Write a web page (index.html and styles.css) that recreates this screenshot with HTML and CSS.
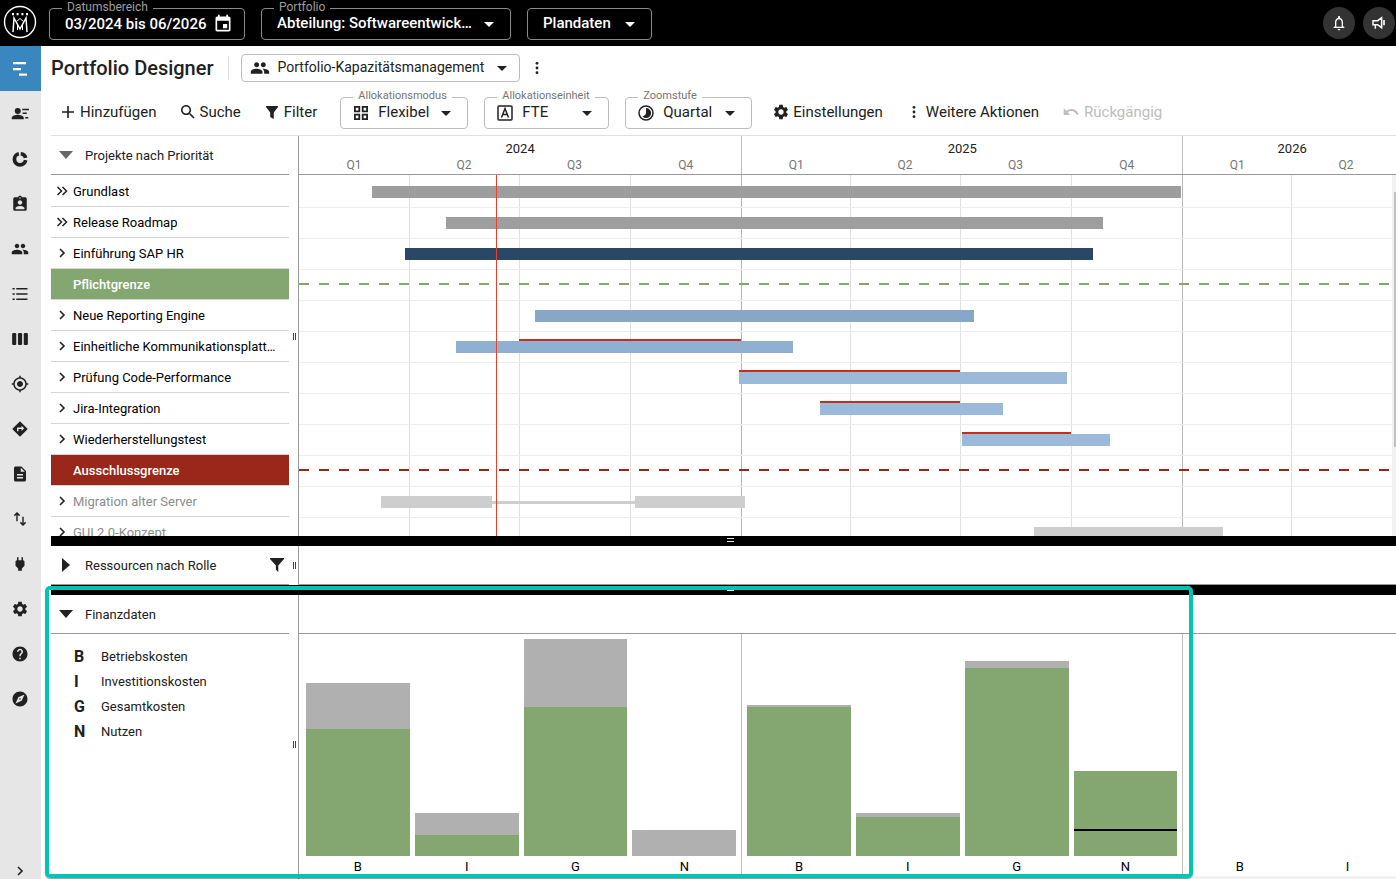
FILE: index.html
```html
<!DOCTYPE html>
<html lang="de">
  <head>
    <meta charset="UTF-8" />
    <meta name="viewport" content="width=device-width, initial-scale=1.0" />
    <title>Portfolio Designer</title>
    <link rel="stylesheet" href="styles.css">
  </head>
  <body>
    <!-- Icons -->
    <svg class="icon-defs" aria-hidden="true">
      <symbol id="i-caret" viewBox="0 0 10 5"><path d="M0 0h10L5 5z"/></symbol>
      <symbol id="i-dots" viewBox="0 0 24 24"><circle cx="12" cy="4" r="2.4"/><circle cx="12" cy="12" r="2.4"/><circle cx="12" cy="20" r="2.4"/></symbol>
      <symbol id="i-people" viewBox="0 0 24 24"><path d="M16 11c1.66 0 2.99-1.34 2.99-3S17.66 5 16 5c-1.66 0-3 1.34-3 3s1.34 3 3 3zm-8 0c1.66 0 2.99-1.34 2.99-3S9.66 5 8 5C6.34 5 5 6.34 5 8s1.34 3 3 3zm0 2c-2.33 0-7 1.17-7 3.5V19h14v-2.5c0-2.33-4.67-3.5-7-3.5zm8 0c-.29 0-.62.02-.97.05 1.16.84 1.97 1.97 1.97 3.45V19h6v-2.5c0-2.33-4.67-3.5-7-3.5z"/></symbol>
      <symbol id="i-settings" viewBox="0 0 24 24"><path d="M19.14 12.94c.04-.3.06-.61.06-.94 0-.32-.02-.64-.07-.94l2.03-1.58c.18-.14.23-.41.12-.61l-1.92-3.32c-.12-.22-.37-.29-.59-.22l-2.39.96c-.5-.38-1.03-.7-1.62-.94l-.36-2.54c-.04-.24-.24-.41-.48-.41h-3.84c-.24 0-.43.17-.47.41l-.36 2.54c-.59.24-1.13.57-1.62.94l-2.39-.96c-.22-.08-.47 0-.59.22L2.74 8.87c-.12.21-.08.47.12.61l2.03 1.58c-.05.3-.09.63-.09.94s.02.64.07.94l-2.03 1.58c-.18.14-.23.41-.12.61l1.92 3.32c.12.22.37.29.59.22l2.39-.96c.5.38 1.03.7 1.62.94l.36 2.54c.05.24.24.41.48.41h3.84c.24 0 .44-.17.47-.41l.36-2.54c.59-.24 1.13-.56 1.62-.94l2.39.96c.22.08.47 0 .59-.22l1.92-3.32c.12-.22.07-.47-.12-.61l-2.01-1.58zM12 15.6c-1.98 0-3.6-1.62-3.6-3.6s1.62-3.6 3.6-3.6 3.6 1.62 3.6 3.6-1.62 3.6-3.6 3.6z"/></symbol>
      <symbol id="i-filter" viewBox="0 0 14 14"><path d="M1 1h12v1L8.800 7.500V14L5.200 12V7.500L1 2z"/></symbol>
      <symbol id="i-funnel" viewBox="0 0 14 14"><path d="M0 0h14v1L8.300 7.500V14L5.900 11.800V7.500L0 1z"/></symbol>
      <symbol id="i-right" viewBox="0 0 12 12"><path d="M4 2l4 4-4 4" fill="none" stroke="currentColor" stroke-width="1.600"/></symbol>
      <symbol id="i-double" viewBox="0 0 12 12"><path d="M1.500 2l4 4-4 4M6.500 2l4 4-4 4" fill="none" stroke="currentColor" stroke-width="1.500"/></symbol>
    </svg>

    <header class="topbar">
      <a class="logo" href="#" aria-label="Startseite">
        <svg viewBox="0 0 34 34" fill="none" stroke="currentColor">
          <circle cx="17" cy="17" r="15.500" stroke-width="1.400"/>
          <path d="M10 27l1-14 6 11 6-11 1 14" stroke-width="1.500"/>
          <path d="M13.500 16.500l3.500-3 3.500 3M14.500 19v6M19.500 19v6" stroke-width="1"/>
          <path d="M10 8v2.200M14.600 8v2.200M19.400 8v2.200M24 8v2.200" stroke-width="2"/>
        </svg>
      </a>
      <div class="field field-dark field-date">
        <label for="dateRange">Datumsbereich</label>
        <button type="button" id="dateRange">
          03/2024 bis 06/2026
          <svg class="icon-20" viewBox="0 0 24 24"><path d="M17 12h-5v5h5v-5zM16 1v2H8V1H6v2H5c-1.11 0-1.99.9-1.99 2L3 19c0 1.1.89 2 2 2h14c1.100 0 2-.9 2-2V5c0-1.100-.9-2-2-2h-1V1h-2zm3 18H5V8h14v11z"/></svg>
        </button>
      </div>
      <div class="field field-dark field-portfolio">
        <label for="portfolio">Portfolio</label>
        <select id="portfolio"><option>Abteilung: Softwareentwick…</option></select>
        <svg class="caret"><use href="#i-caret"/></svg>
      </div>
      <div class="field field-dark field-plan">
        <select aria-label="Datenbasis"><option>Plandaten</option></select>
        <svg class="caret"><use href="#i-caret"/></svg>
      </div>
      <div class="topbar-actions">
        <button type="button" class="round-btn" aria-label="Benachrichtigungen">
          <svg class="icon-16" viewBox="0 0 24 24"><path d="M12 23c1.100 0 2-.9 2-2h-4c0 1.100.9 2 2 2zm6-6v-6c0-3.070-1.630-5.640-4.500-6.320V3c0-.83-.67-1.500-1.500-1.500s-1.500.67-1.500 1.500v1.680C7.640 5.360 6 7.920 6 11v6l-2 1v1.500h16V18l-2-1zm-2 .5H8V11c0-2.480 1.510-4.500 4-4.500s4 2.020 4 4.500v6.500z"/></svg>
        </button>
        <button type="button" class="round-btn" aria-label="Neuigkeiten">
          <svg class="icon-16" viewBox="0 0 24 24" fill="none" stroke="currentColor" stroke-width="2.200"><path d="M3 8.500h7l6-4.500v15l-6-4.500H3zM6.500 15v5.500"/><path d="M19.500 7.500v8" stroke-width="2.500"/></svg>
        </button>
      </div>
    </header>

    <div class="layout">
      <nav class="sidebar">
        <a class="active" href="#" aria-label="Portfolio Designer"><svg viewBox="0 0 18 18"><path d="M2 2h13v2.200H2zM2 8h8v2.200H2zM8 13.500h8v2.200H8z"/></svg></a>
        <a href="#" aria-label="Rollen"><svg viewBox="0 0 24 24"><circle cx="9" cy="8" r="4"/><path d="M1 19v-2c0-2.500 5-4 8-4s8 1.500 8 4v2zM15 5h9v2h-9zM15.500 10H21v2h-5.500zM19 16h4v2h-4z"/></svg></a>
        <a href="#" aria-label="Auslastung"><svg viewBox="0 0 24 24" fill="none" stroke="currentColor" stroke-width="5"><path d="M13 5a7.300 7.300 0 0 1 6.500 5.500M19.500 13.500A7.500 7.500 0 1 1 10.500 5"/></svg></a>
        <a href="#" aria-label="Aufgaben"><svg viewBox="0 0 24 24"><path d="M19 3h-4.180C14.400 1.840 13.300 1 12 1c-1.300 0-2.400.84-2.820 2H5c-1.100 0-2 .9-2 2v14c0 1.100.9 2 2 2h14c1.100 0 2-.9 2-2V5c0-1.100-.9-2-2-2zm-7 0c.55 0 1 .45 1 1s-.45 1-1 1-1-.45-1-1 .45-1 1-1zm0 4c1.660 0 3 1.340 3 3s-1.340 3-3 3-3-1.340-3-3 1.340-3 3-3zm6 12H6v-1.400c0-2 4-3.100 6-3.100s6 1.100 6 3.100V19z"/></svg></a>
        <a href="#" aria-label="Team"><svg><use href="#i-people"/></svg></a>
        <a href="#" aria-label="Liste"><svg viewBox="0 0 24 24"><path d="M2 4h3v2H2zM7 4h15v2H7zM2 11h3v2H2zM7 11h15v2H7zM2 18h3v2H2zM7 18h15v2H7z"/></svg></a>
        <a href="#" aria-label="Board"><svg viewBox="0 0 24 24"><rect x="1.500" y="4" width="5.500" height="16" rx="1.500"/><rect x="9.300" y="4" width="5.500" height="16" rx="1.500"/><rect x="17" y="4" width="5.500" height="16" rx="1.500"/></svg></a>
        <a href="#" aria-label="Ziele"><svg viewBox="0 0 24 24"><path d="M12 8c-2.210 0-4 1.790-4 4s1.790 4 4 4 4-1.790 4-4-1.790-4-4-4zm8.940 3c-.46-4.170-3.770-7.480-7.940-7.940V1h-2v2.060C6.830 3.520 3.520 6.830 3.060 11H1v2h2.060c.46 4.170 3.770 7.480 7.940 7.940V23h2v-2.060c4.170-.46 7.480-3.770 7.940-7.940H23v-2h-2.060zM12 19c-3.870 0-7-3.130-7-7s3.130-7 7-7 7 3.130 7 7-3.130 7-7 7z"/></svg></a>
        <a href="#" aria-label="Roadmap"><svg viewBox="0 0 24 24"><path d="M21.710 11.290l-9-9c-.39-.39-1.020-.39-1.410 0l-9 9c-.39.39-.39 1.020 0 1.410l9 9c.39.39 1.020.39 1.410 0l9-9c.39-.38.39-1.010 0-1.410zM14 14.500V12h-4v3H8v-4c0-.55.45-1 1-1h5V7.500l3.500 3.500-3.500 3.500z"/></svg></a>
        <a href="#" aria-label="Berichte"><svg viewBox="0 0 24 24"><path d="M14 2H6c-1.100 0-1.990.9-1.990 2L4 20c0 1.100.89 2 1.990 2H18c1.100 0 2-.9 2-2V8l-6-6zm2 16H8v-2h8v2zm0-4H8v-2h8v2zm-3-5V3.500L18.500 9H13z"/></svg></a>
        <a href="#" aria-label="Import und Export"><svg viewBox="0 0 24 24" fill="none" stroke="currentColor" stroke-width="1.900"><path d="M8 15V4M4.500 7.500L8 4l3.500 3.500M16 9v11M12.500 16.500L16 20l3.500-3.500"/></svg></a>
        <a href="#" aria-label="Integrationen"><svg viewBox="0 0 24 24"><path d="M16.010 7L16 3h-2v4h-4V3H8v4h-.01C7 6.990 6 7.990 6 8.990v5.490L9.500 18v3h5v-3l3.500-3.510v-5.500c0-1-1-2-1.990-1.990z"/></svg></a>
        <a href="#" aria-label="Einstellungen"><svg><use href="#i-settings"/></svg></a>
        <a href="#" aria-label="Hilfe"><svg viewBox="0 0 24 24"><path d="M12 2C6.480 2 2 6.480 2 12s4.480 10 10 10 10-4.480 10-10S17.520 2 12 2zm1 17h-2v-2h2v2zm2.070-7.750l-.9.92C13.450 12.900 13 13.500 13 15h-2v-.5c0-1.100.45-2.100 1.170-2.830l1.240-1.260c.37-.36.59-.86.59-1.410 0-1.100-.9-2-2-2s-2 .9-2 2H8c0-2.210 1.790-4 4-4s4 1.790 4 4c0 .88-.36 1.680-.93 2.250z"/></svg></a>
        <a href="#" aria-label="Tour"><svg viewBox="0 0 24 24"><path d="M12 10.900c-.61 0-1.100.49-1.100 1.100s.49 1.100 1.100 1.100c.61 0 1.100-.49 1.100-1.100s-.49-1.100-1.100-1.100zM12 2C6.480 2 2 6.480 2 12s4.480 10 10 10 10-4.480 10-10S17.520 2 12 2zm2.190 12.190L6 18l3.810-8.190L18 6l-3.810 8.190z"/></svg></a>
        <button type="button" class="expand" aria-label="Menü ausklappen"><svg><use href="#i-right"/></svg></button>
      </nav>

      <main>
        <div class="title-row">
          <h1>Portfolio Designer</h1>
          <div class="field field-view">
            <svg class="field-icon icon-20"><use href="#i-people"/></svg>
            <select aria-label="Ansicht"><option>Portfolio-Kapazitätsmanagement</option></select>
            <svg class="caret"><use href="#i-caret"/></svg>
          </div>
          <button type="button" class="tool-btn" aria-label="Mehr"><svg class="icon-14"><use href="#i-dots"/></svg></button>
        </div>

        <div class="toolbar">
          <button type="button" class="tool-btn"><svg class="icon-14" viewBox="0 0 14 14"><path d="M6.200 1h1.600v5.200H13v1.600H7.800V13H6.200V7.800H1V6.200h5.200z"/></svg>Hinzufügen</button>
          <button type="button" class="tool-btn"><svg class="icon-14" viewBox="3 3 18 18"><path d="M15.500 14h-.79l-.28-.27C15.410 12.590 16 11.110 16 9.500 16 5.910 13.090 3 9.500 3S3 5.910 3 9.500 5.910 16 9.500 16c1.610 0 3.090-.59 4.230-1.570l.27.28v.79l5 4.990L20.490 19l-4.990-5zm-6 0C7.010 14 5 11.990 5 9.500S7.010 5 9.500 5 14 7.010 14 9.500 11.990 14 9.500 14z"/></svg>Suche</button>
          <button type="button" class="tool-btn"><svg class="icon-14"><use href="#i-filter"/></svg>Filter</button>
          <div class="tool-fields">
            <div class="field field-mode">
              <label for="mode">Allokationsmodus</label>
              <svg class="field-icon icon-16" viewBox="0 0 16 16" fill="none" stroke="currentColor" stroke-width="1.800"><path d="M1.900 1.900h4.400v4.400H1.900zM9.700 1.900h4.400v4.400H9.700zM1.900 9.700h4.400v4.400H1.900zM9.700 9.700h4.400v4.400H9.700z"/></svg>
              <select id="mode"><option>Flexibel</option></select>
              <svg class="caret"><use href="#i-caret"/></svg>
            </div>
            <div class="field field-unit">
              <label for="unit">Allokationseinheit</label>
              <svg class="field-icon icon-16" viewBox="0 0 16 16" fill="none" stroke="currentColor" stroke-width="1.500"><rect x="1" y="1" width="14" height="14" rx="1"/><path d="M4.500 12.500L8 3.500l3.500 9M5.800 9.500h4.400"/></svg>
              <select id="unit"><option>FTE</option></select>
              <svg class="caret"><use href="#i-caret"/></svg>
            </div>
            <div class="field field-zoom">
              <label for="zoom">Zoomstufe</label>
              <svg class="field-icon icon-16" viewBox="0 0 16 16"><circle cx="8" cy="8" r="7" fill="none" stroke="currentColor" stroke-width="1.500"/><path d="M8 3a5 5 0 1 1-3.500 8.500C6.500 10.500 8 9.500 8 8z"/></svg>
              <select id="zoom"><option>Quartal</option></select>
              <svg class="caret"><use href="#i-caret"/></svg>
            </div>
          </div>
          <button type="button" class="tool-btn tight"><svg class="icon-18"><use href="#i-settings"/></svg>Einstellungen</button>
          <button type="button" class="tool-btn"><svg class="icon-14"><use href="#i-dots"/></svg>Weitere Aktionen</button>
          <button type="button" class="tool-btn" disabled><svg class="icon-16" viewBox="1 1 22 22"><path d="M12.500 8c-2.650 0-5.050.99-6.900 2.600L2 7v9h9l-3.620-3.620c1.390-1.160 3.160-1.880 5.120-1.880 3.540 0 6.550 2.310 7.600 5.500l2.370-.78C21.080 11.030 17.150 8 12.500 8z"/></svg>Rückgängig</button>
        </div>

        <!-- Projekte -->
        <section class="panel projects">
          <button type="button" class="panel-title"><span class="arrow arrow-down muted"></span>Projekte nach Priorität</button>
          <div class="timeline-head">
            <div class="years"><span>2024</span><span>2025</span><span>2026</span></div>
            <div class="quarters">
              <span>Q1</span><span>Q2</span><span>Q3</span><span>Q4</span>
              <span>Q1</span><span>Q2</span><span>Q3</span><span>Q4</span>
              <span>Q1</span><span>Q2</span>
            </div>
          </div>
          <ul class="project-list">
            <li><svg><use href="#i-double"/></svg><span>Grundlast</span></li>
            <li><svg><use href="#i-double"/></svg><span>Release Roadmap</span></li>
            <li><svg><use href="#i-right"/></svg><span>Einführung SAP HR</span></li>
            <li class="limit limit-green"><span>Pflichtgrenze</span></li>
            <li><svg><use href="#i-right"/></svg><span>Neue Reporting Engine</span></li>
            <li><svg><use href="#i-right"/></svg><span>Einheitliche Kommunikationsplatt…</span></li>
            <li><svg><use href="#i-right"/></svg><span>Prüfung Code-Performance</span></li>
            <li><svg><use href="#i-right"/></svg><span>Jira-Integration</span></li>
            <li><svg><use href="#i-right"/></svg><span>Wiederherstellungstest</span></li>
            <li class="limit limit-red"><span>Ausschlussgrenze</span></li>
            <li class="excluded"><svg><use href="#i-right"/></svg><span>Migration alter Server</span></li>
            <li class="excluded"><svg><use href="#i-right"/></svg><span>GUI 2.0-Konzept</span></li>
          </ul>
          <div class="gantt">
            <!-- --start, --days: Tage ab 01.01.2024 -->
            <div class="gantt-canvas">
              <div class="grid-lines"><i></i><i></i><i></i><i></i><i class="year"></i><i></i><i></i><i></i><i class="year"></i><i></i></div>
              <div class="gantt-row"><div class="bar gray" style="--start: 60; --days: 670"></div></div>
              <div class="gantt-row"><div class="bar gray" style="--start: 122; --days: 543"></div></div>
              <div class="gantt-row"><div class="bar navy" style="--start: 88; --days: 569"></div></div>
              <div class="gantt-row"><div class="dashes green"></div></div>
              <div class="gantt-row"><div class="bar blue-1" style="--start: 195; --days: 364"></div></div>
              <div class="gantt-row"><div class="bar blue-2" style="--start: 130; --days: 279"><b style="--from: 52; --over: 184"></b></div></div>
              <div class="gantt-row"><div class="bar blue-3" style="--start: 364; --days: 272"><b style="--from: 0; --over: 183"></b></div></div>
              <div class="gantt-row"><div class="bar blue-3" style="--start: 431; --days: 152"><b style="--from: 0; --over: 116"></b></div></div>
              <div class="gantt-row"><div class="bar blue-3" style="--start: 549; --days: 122"><b style="--from: 0; --over: 90"></b></div></div>
              <div class="gantt-row"><div class="dashes red"></div></div>
              <div class="gantt-row"><div class="bar ghost" style="--start: 68; --days: 92"></div><div class="bar ghost link" style="--start: 0; --days: 118"></div><div class="bar ghost" style="--start: 0; --days: 91"></div></div>
              <div class="gantt-row"><div class="bar ghost" style="--start: 608; --days: 157"></div></div>
              <div class="today" style="--start: 163"></div>
            </div>
            <div class="scroll-track"><div class="scroll-thumb"></div></div>
          </div>
          <div class="resizer"></div>
        </section>

        <div class="splitter"><span></span></div>

        <!-- Ressourcen -->
        <section class="panel resources">
          <button type="button" class="panel-title"><span class="arrow arrow-right"></span>Ressourcen nach Rolle<svg class="icon-14"><use href="#i-funnel"/></svg></button>
          <div class="timeline-head"></div>
          <div class="resizer"></div>
        </section>

        <div class="splitter"><span></span></div>

        <!-- Finanzdaten -->
        <section class="panel finance">
          <button type="button" class="panel-title"><span class="arrow arrow-down"></span>Finanzdaten</button>
          <div class="timeline-head"></div>
          <dl class="legend">
            <dt>B</dt><dd>Betriebskosten</dd>
            <dt>I</dt><dd>Investitionskosten</dd>
            <dt>G</dt><dd>Gesamtkosten</dd>
            <dt>N</dt><dd>Nutzen</dd>
          </dl>
          <div class="chart">
            <div class="chart-years">
              <div class="chart-year">
                <div class="column"><i class="rest" style="height: 46px"></i><i class="used" style="height: 127px"></i><span>B</span></div>
                <div class="column"><i class="rest" style="height: 22px"></i><i class="used" style="height: 21px"></i><span>I</span></div>
                <div class="column"><i class="rest" style="height: 68px"></i><i class="used" style="height: 149px"></i><span>G</span></div>
                <div class="column"><i class="rest" style="height: 26px"></i><span>N</span></div>
              </div>
              <div class="chart-year">
                <div class="column"><i class="rest" style="height: 2px"></i><i class="used" style="height: 149px"></i><span>B</span></div>
                <div class="column"><i class="rest" style="height: 4px"></i><i class="used" style="height: 39px"></i><span>I</span></div>
                <div class="column"><i class="rest" style="height: 7px"></i><i class="used" style="height: 188px"></i><span>G</span></div>
                <div class="column"><i class="used" style="height: 58px"></i><i class="target"></i><i class="used" style="height: 25px"></i><span>N</span></div>
              </div>
              <div class="chart-year">
                <div class="column"><span>B</span></div>
                <div class="column"><span>I</span></div>
                <div class="column"></div>
                <div class="column"></div>
              </div>
            </div>
            <div class="scroll-bottom"></div>
          </div>
          <div class="resizer"></div>
          <div class="highlight"></div>
        </section>
      </main>
    </div>
  </body>
</html>
```

FILE: styles.css
```css
* {
  box-sizing: border-box;
}
body {
  margin: 0;
  height: 100vh;
  display: flex;
  flex-direction: column;
  overflow: hidden;
  font-family: Roboto, "Liberation Sans", sans-serif;
  font-size: 13px;
  color: #212121;
  background: #fff;
}
button,
select {
  margin: 0;
  padding: 0;
  border: none;
  background: none;
  font: inherit;
  color: inherit;
  cursor: pointer;
}
svg {
  fill: currentColor;
  flex: none;
}
svg[fill="none"] {
  fill: none;
}
.icon-defs {
  position: absolute;
  width: 0;
  height: 0;
}
.icon-14 {
  width: 14px;
  height: 14px;
}
.icon-16 {
  width: 16px;
  height: 16px;
}
.icon-18 {
  width: 18px;
  height: 18px;
}
.icon-20 {
  width: 20px;
  height: 20px;
}

/* Kopfzeile */
.topbar {
  height: 46px;
  flex: none;
  display: flex;
  align-items: center;
  gap: 16px;
  padding: 2px 1px 0 3px;
  background: #000;
  color: #fff;
}
.logo {
  width: 34px;
  height: 34px;
  margin: -4px -4px 0 0;
  color: #fff;
}
.topbar-actions {
  display: flex;
  gap: 8px;
  margin: -3px 0 0 auto;
}
.round-btn {
  width: 32px;
  height: 32px;
  display: flex;
  align-items: center;
  justify-content: center;
  border-radius: 50%;
  background: #333;
}

/* Auswahlfelder */
.field {
  position: relative;
  height: 32px;
  display: flex;
  align-items: center;
  border: 1px solid #bdbdbd;
  border-radius: 4px;
  font-size: 15px;
}
.field label {
  position: absolute;
  top: -10px;
  left: 12px;
  padding: 0 5px;
  font-size: 11px;
  line-height: 16px;
  color: #757575;
  background: #fff;
}
.field select {
  appearance: none;
  width: 100%;
  height: 100%;
  padding: 0 0 2px 9px;
  outline: none;
}
.field-icon {
  margin-left: 12px;
}
.caret {
  position: absolute;
  right: 16px;
  top: 13px;
  width: 10px;
  height: 5px;
  pointer-events: none;
}
.field-dark {
  border-color: #8a8a8a;
  font-weight: 500;
}
.field-dark label {
  font-size: 12px;
  font-weight: 400;
  color: #9e9e9e;
  background: #000;
}
.field-dark select {
  padding-left: 15px;
}
.field-date {
  width: 196px;
}
.field-date button {
  width: 100%;
  display: flex;
  align-items: center;
  justify-content: space-between;
  padding: 0 11px 0 15px;
}
.field-portfolio {
  width: 250px;
}
.field-plan {
  width: 125px;
}
.field-view {
  width: 279px;
  height: 28px;
  font-size: 14px;
}
.field-view .field-icon {
  margin-left: 8px;
}
.field-view select {
  padding-left: 8px;
}
.field-view .caret {
  right: 12px;
  top: 11px;
}
.field-mode {
  width: 128px;
}
.field-unit {
  width: 125px;
}
.field-zoom {
  width: 127px;
}

.layout {
  flex: 1;
  min-height: 0;
  display: flex;
}

/* Seitenleiste */
.sidebar {
  width: 41px;
  flex: none;
  display: flex;
  flex-direction: column;
  background: #e6e6e6;
}
.sidebar a {
  height: 45px;
  display: flex;
  align-items: center;
  justify-content: center;
  padding-right: 2px;
  color: #212121;
}
.sidebar a.active {
  color: #fff;
  background: #3a87c0;
}
.sidebar svg {
  width: 18px;
  height: 18px;
}
.expand {
  height: 16px;
  display: flex;
  align-items: center;
  justify-content: center;
  margin-top: auto;
  padding-right: 2px;
}
.expand svg {
  width: 12px;
  height: 12px;
}

main {
  flex: 1;
  min-width: 0;
  display: flex;
  flex-direction: column;
  padding-left: 10px;
}
.title-row {
  height: 44px;
  flex: none;
  display: flex;
  align-items: center;
  gap: 12px;
}
h1 {
  margin: 0;
  padding-right: 14px;
  border-right: 1px solid #e0e0e0;
  font-size: 20px;
  font-weight: 500;
  line-height: 24px;
  white-space: nowrap;
}
.title-row .tool-btn {
  margin-left: -2px;
}
.toolbar {
  height: 46px;
  flex: none;
  display: flex;
  align-items: center;
  gap: 24px;
  padding: 0 10px;
  border-bottom: 1px solid #e0e0e0;
}
.tool-btn {
  display: flex;
  align-items: center;
  gap: 5px;
  padding-bottom: 1px;
  font-size: 15px;
  white-space: nowrap;
}
.tool-btn.tight {
  gap: 3px;
}
.tool-btn:disabled {
  color: #bdbdbd;
  cursor: default;
}
.tool-fields {
  display: flex;
  gap: 16px;
  margin: 0 -4px 0 -1px;
}

/* Bereiche */
.panel {
  position: relative;
  flex: none;
  display: grid;
  grid-template-columns: 238px 9px minmax(0, 1fr);
  grid-template-rows: 39px;
}
.panel-title {
  grid-area: 1 / 1;
  display: flex;
  align-items: center;
  padding-left: 8px;
  border-bottom: 1px solid #999;
  text-align: left;
}
.panel-title svg {
  margin: 0 5px 0 auto;
}
.arrow {
  width: 14px;
  height: 14px;
  margin-right: 12px;
  background: #212121;
}
.arrow-down {
  clip-path: polygon(0 3px, 14px 3px, 7px 11px);
}
.arrow-right {
  clip-path: polygon(3px 0, 3px 14px, 11px 7px);
}
.arrow.muted {
  background: #666;
}
.timeline-head {
  grid-area: 1 / 3;
  overflow: hidden;
  border-left: 1px solid #999;
  border-bottom: 1px solid #999;
}
/* vertikaler Griff zwischen Liste und Zeitachse */
.resizer {
  grid-area: 1 / 2 / -1 / 3;
  align-self: center;
  width: 3px;
  height: 7px;
  margin-left: 4px;
  border: solid #424242;
  border-width: 0 1px;
}
.years,
.quarters,
.grid-lines,
.chart-years {
  display: grid;
  margin-right: -5px;
}
.years,
.chart-years {
  grid-template-columns: 366fr 365fr 181fr;
}
.quarters,
.grid-lines {
  grid-template-columns: 91fr 91fr 92fr 92fr 90fr 91fr 92fr 92fr 90fr 91fr;
}
.years span {
  height: 21px;
  padding-top: 5px;
  line-height: 16px;
  text-align: center;
}
.quarters span {
  height: 17px;
  line-height: 16px;
  font-size: 12px;
  text-align: center;
  color: #757575;
}
.years span:not(:first-child),
.quarters span:nth-child(4n + 1):not(:first-child) {
  border-left: 1px solid #bdbdbd;
}

.projects {
  flex: 1;
  min-height: 0;
  grid-template-rows: 39px minmax(0, 1fr);
  overflow: hidden;
}
.project-list {
  grid-area: 2 / 1;
  margin: 0;
  padding: 1px 0 0;
  list-style: none;
  overflow: hidden;
}
.project-list li {
  height: 31px;
  display: flex;
  align-items: center;
  gap: 5px;
  padding: 0 0 0 5px;
  border-bottom: 1px solid #d6d6d6;
  color: #000;
}
.project-list svg {
  width: 12px;
  height: 12px;
  color: #212121;
}
.project-list span {
  overflow: hidden;
  text-overflow: ellipsis;
  white-space: nowrap;
}
.project-list .limit {
  padding-left: 22px;
  font-weight: 500;
  color: #fff;
}
.limit-green {
  background: #84a671 padding-box;
}
.limit-red {
  background: #99271a padding-box;
}
.project-list .excluded {
  color: #8c8c8c;
}

.gantt {
  grid-area: 2 / 3;
  display: flex;
  border-left: 1px solid #999;
  overflow: hidden;
}
.gantt-canvas {
  position: relative;
  flex: 1;
  margin-right: -9px;
  padding-top: 2px;
}
.grid-lines {
  position: absolute;
  inset: 0;
  margin: 0;
}
.grid-lines i:not(:first-child) {
  border-left: 1px solid #e0e0e0;
}
.grid-lines i.year {
  border-color: #b5b5b5;
}
.gantt-row {
  position: relative;
  height: 31px;
  display: flex;
  align-items: center;
  border-bottom: 1px solid #eee;
}
.bar {
  position: relative;
  height: 12px;
  margin-left: calc(var(--start) / 912 * 100%);
  width: calc(var(--days) / 912 * 100%);
}
/* Überlast in Bezug auf die Balkenbreite */
.bar b {
  position: absolute;
  top: -2px;
  left: calc(var(--from) / var(--days) * 100%);
  height: 2px;
  width: calc(var(--over) / var(--days) * 100%);
  background: #c62f1d;
}
.gray {
  background: #9e9e9e;
}
.navy {
  background: #2a4866;
}
.blue-1 {
  background: #86a7c7;
}
.blue-2 {
  background: #8fb0d1;
}
.blue-3 {
  background: #9bbada;
}
.ghost {
  background: #cecece;
}
.link {
  height: 3px;
}
.dashes {
  flex: 1;
  height: 2px;
  margin-top: -2px;
}
.dashes.green {
  background: repeating-linear-gradient(90deg, #84a671 0 10px, transparent 10px 20px);
}
.dashes.red {
  background: repeating-linear-gradient(90deg, #99271a 0 10px, transparent 10px 20px);
}
.today {
  position: absolute;
  top: 0;
  bottom: 0;
  left: calc(var(--start) / 912 * 100%);
  width: 1px;
  background: #e8402a;
}
.scroll-track {
  position: relative;
  flex: none;
  width: 4px;
  padding: 17px 0 0 2px;
  background: #f1f1f1;
}
.scroll-thumb {
  height: 74%;
  background: #c1c1c1;
}

.splitter {
  height: 10px;
  flex: none;
  display: flex;
  justify-content: center;
  padding: 2px 0 0 14px;
  background: #000;
}
.splitter span {
  width: 7px;
  height: 4px;
  border: solid #e6e6e6;
  border-width: 1px 0;
}

/* Finanzdaten */
.finance {
  grid-template-rows: 39px auto;
}
.finance .resizer {
  margin-top: 14px;
}
.legend {
  grid-area: 2 / 1;
  display: grid;
  grid-template-columns: 27px 1fr;
  grid-auto-rows: 25px;
  align-items: center;
  margin: 0;
  padding: 10px 0 0 23px;
}
.legend dt {
  font-size: 16px;
  font-weight: 700;
}
.legend dd {
  margin: 0;
}
.chart {
  grid-area: 2 / 3;
  border-left: 1px solid #999;
  overflow: hidden;
}
.chart-year {
  height: 242px;
  display: grid;
  grid-template-columns: repeat(4, 1fr);
  gap: 5px;
  padding: 0 5px;
}
.chart-year:first-child {
  padding-left: 7px;
}
.chart-year:not(:first-child) {
  border-left: 1px solid #bdbdbd;
}
/* 2026 ist nur bis zur Jahresmitte sichtbar */
.chart-year:last-child {
  width: 200%;
}
.column {
  display: flex;
  flex-direction: column;
  justify-content: flex-end;
  text-align: center;
  color: #000;
}
.column span {
  height: 20px;
  line-height: 22px;
}
.rest {
  background: #b0b0b0;
}
.used {
  background: #84a671;
}
.target {
  height: 2px;
  background: #000;
}
.scroll-bottom {
  height: 3px;
  background: #f1f1f1;
}
.highlight {
  position: absolute;
  top: -9px;
  right: 203px;
  bottom: 1px;
  left: -6px;
  border: 4px solid #00c4b4;
  border-radius: 5px;
  box-shadow: 0 1px 1px rgba(0, 0, 0, 0.4);
  pointer-events: none;
}
```
